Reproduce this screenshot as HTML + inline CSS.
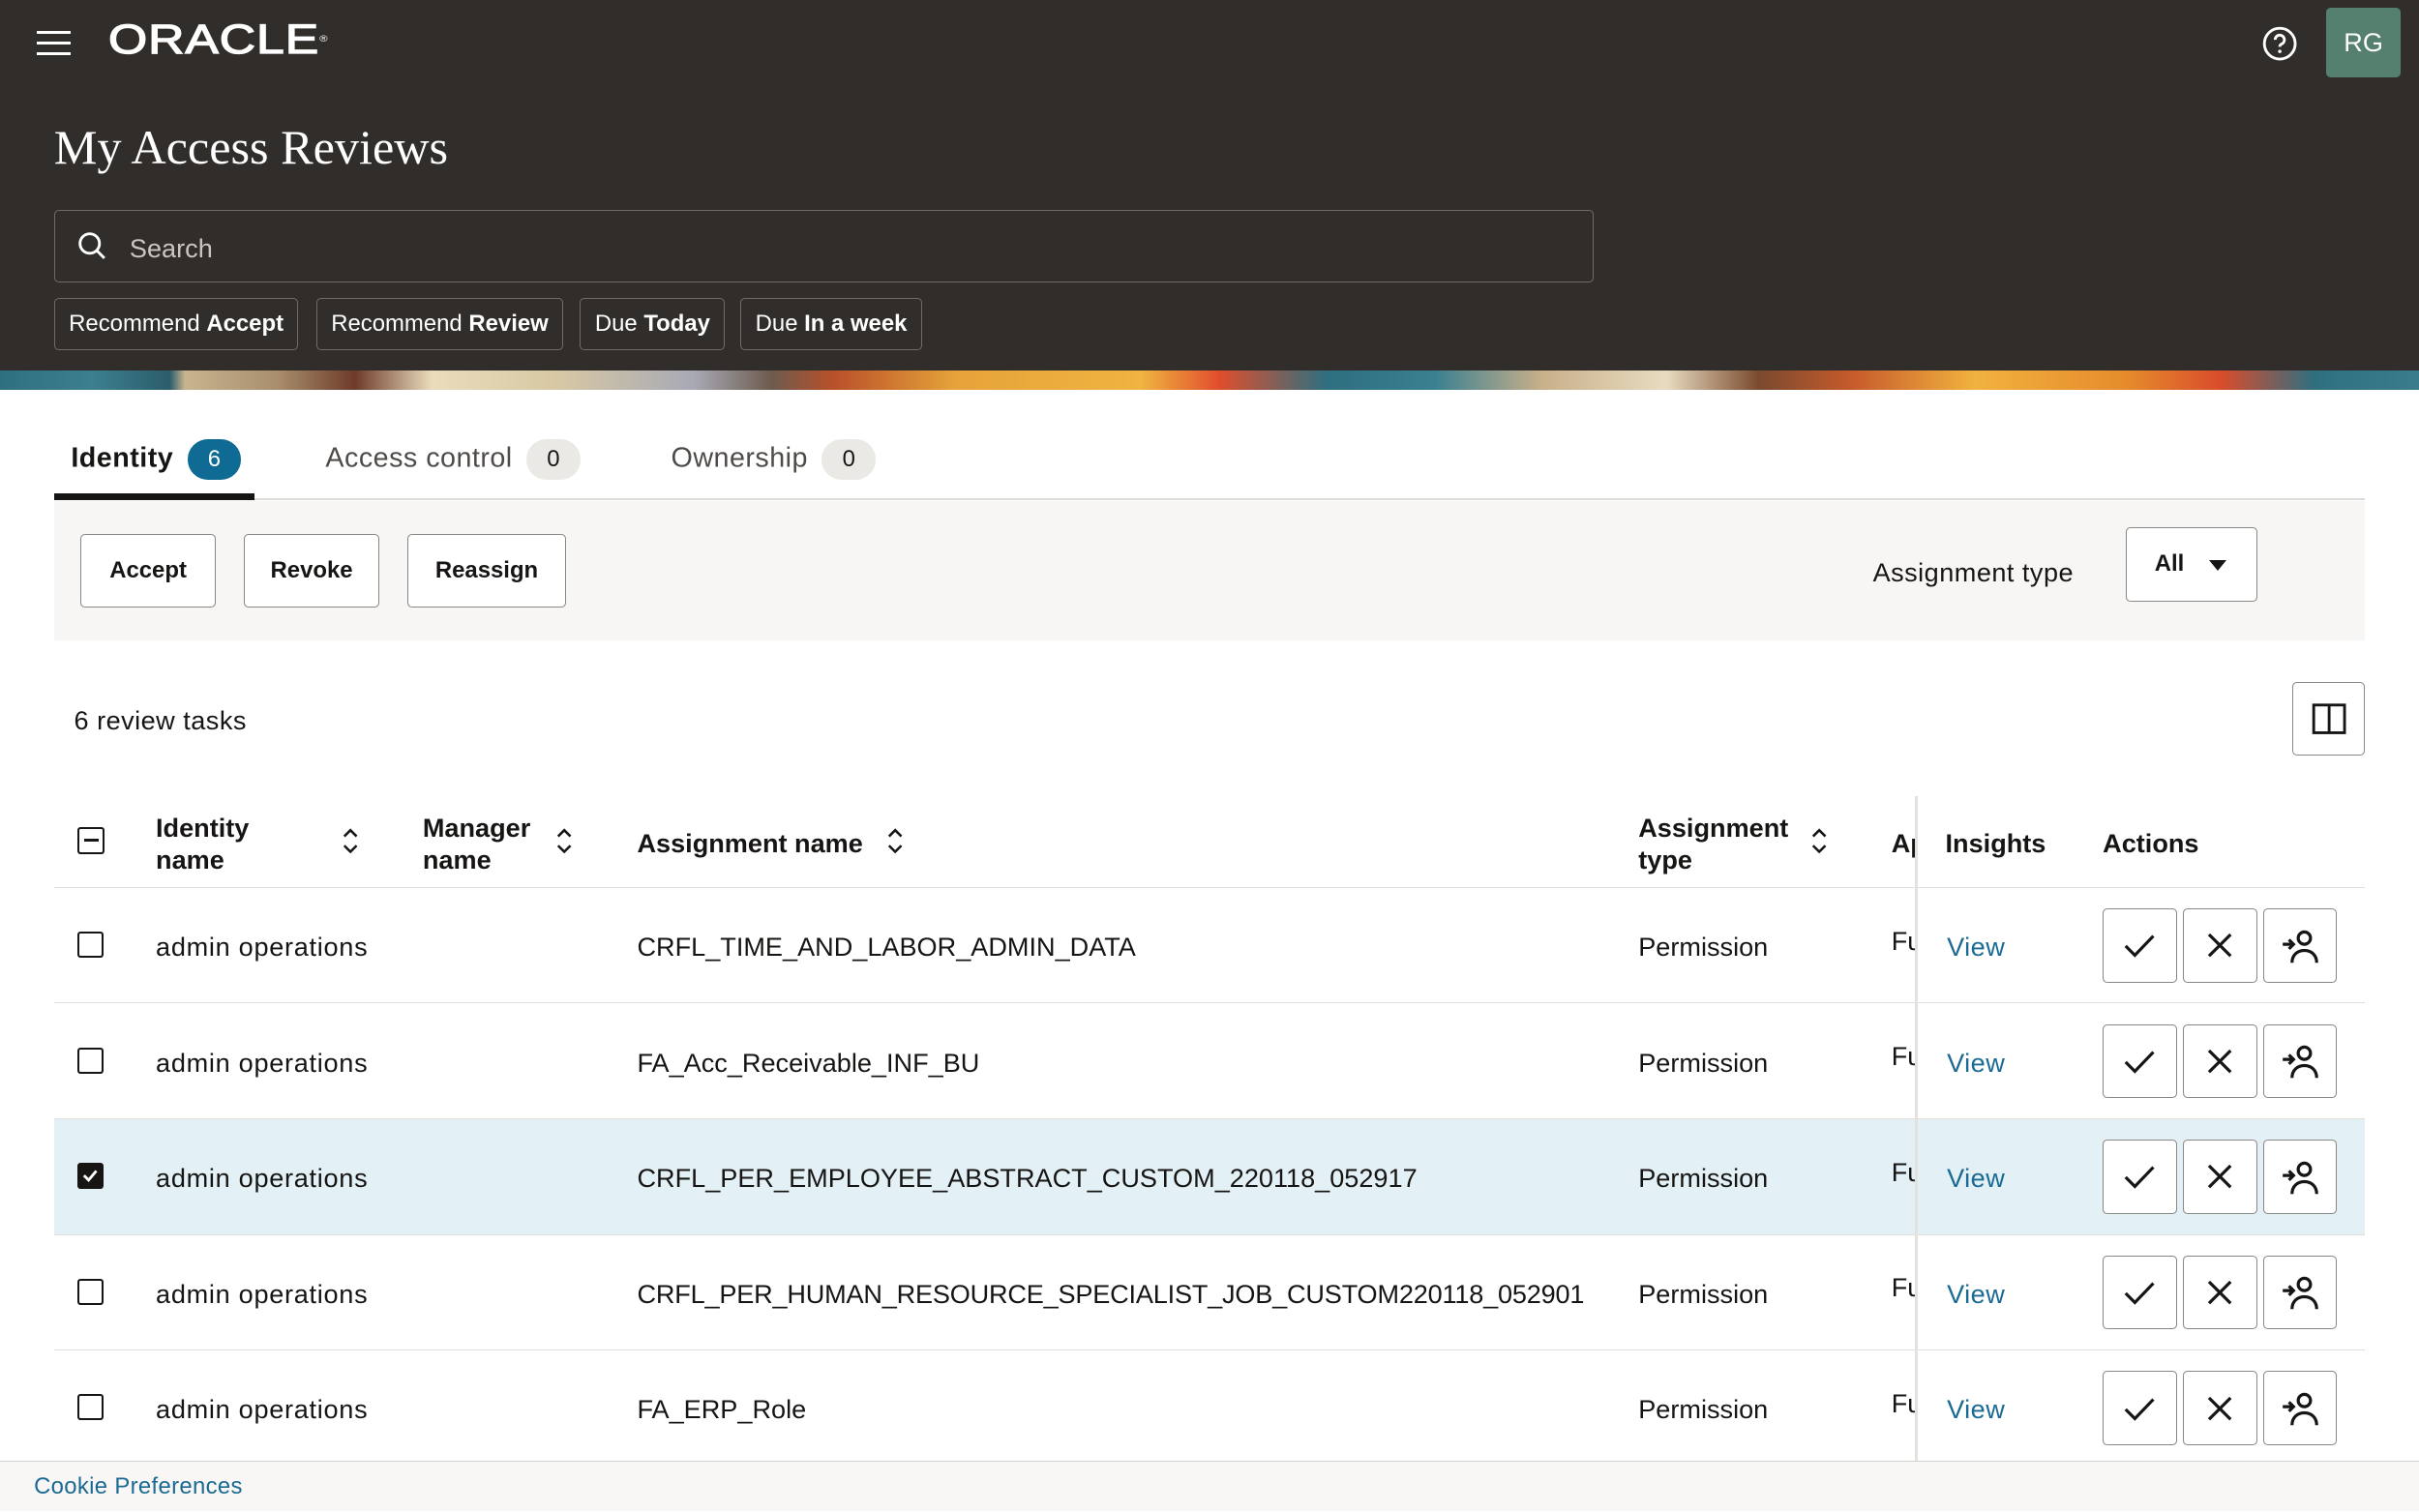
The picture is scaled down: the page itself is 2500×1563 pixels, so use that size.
<!DOCTYPE html>
<html><head><meta charset="utf-8"><style>
*{box-sizing:border-box;margin:0;padding:0}
html,body{width:2500px;height:1563px;overflow:hidden;background:#fff}
#w{zoom:1.59439;width:1568px;height:980px;position:relative;font-family:"Liberation Sans",Arial,sans-serif;color:#161513;font-size:17px}
.a{position:absolute}
.hdr{left:0;top:0;width:1568px;height:241px;background:#312d2a}
.band{left:0;top:240px;width:1568px;height:13px;background:linear-gradient(90deg,#2f6f80 0,#3c7f8f 60px,#2b5d6b 110px,#c8b48f 120px,#a88e6c 180px,#6e3b2a 230px,#eadcbc 280px,#d8c9a4 360px,#a7a9b5 450px,#6d5b4e 500px,#b9502a 540px,#e6a33a 620px,#f0b440 740px,#e04e2c 790px,#2e6f80 860px,#3a8090 930px,#c9b08a 1000px,#e8dcc0 1080px,#7a4a2e 1140px,#c65a2c 1200px,#f1b23e 1280px,#e58a2c 1380px,#d94c2b 1440px,#2f6f80 1500px,#3b7c8c 1568px)}
.chip{top:193px;height:34px;border:1px solid #6f6b67;border-radius:3px;color:#fff;font-size:15px;line-height:32px;padding:0 9px;white-space:nowrap}
.chip b{font-weight:bold}
.tab{top:285px;font-size:18px;color:#4f4b48;white-space:nowrap;letter-spacing:0.3px}
.badge{display:inline-block;min-width:35px;height:26px;border-radius:13px;background:#ebe9e6;text-align:center;line-height:26px;font-size:15px;margin-left:9px;vertical-align:middle;color:#161513;letter-spacing:0}
.btn{height:48px;border:1px solid #8a8683;border-radius:3px;background:#fff;font-weight:bold;font-size:15px;line-height:46px;text-align:center}
.th{font-weight:bold;font-size:17px;line-height:21px}
.row{left:35px;width:1498px;height:75px;border-top:1px solid #e1dfdc}
.cell{font-size:17px;white-space:nowrap}
.cell.ad{letter-spacing:0.45px}
.cb{width:17px;height:17px;border:1.6px solid #161513;border-radius:2px}
.ab{width:48px;height:48px;border:1px solid #8a8683;border-radius:3px;background:#fff;display:flex;align-items:center;justify-content:center}
.view{color:#1a6a93;font-size:17px;letter-spacing:0.3px}
</style></head><body><div id="w">
<div class="a hdr"></div>
<div class="a band"></div>
<div class="a" style="left:24px;top:20px;width:22px;height:16px;border-top:2px solid #fff;border-bottom:2px solid #fff"></div>
<div class="a" style="left:24px;top:27px;width:22px;height:2px;background:#fff"></div>
<div class="a" style="left:70px;top:12px;color:#fff;font-size:27px;line-height:28px;letter-spacing:0.5px;transform:scaleX(1.2);transform-origin:left;-webkit-text-stroke:0.8px #fff">ORACLE<span style="font-size:6px;vertical-align:top;-webkit-text-stroke:0">®</span></div>
<svg class="a" style="left:1466px;top:16px" width="24" height="24" viewBox="0 0 24 24"><circle cx="12" cy="12" r="10" fill="none" stroke="#fff" stroke-width="1.8"/><path d="M9 9.5a3 3 0 1 1 4 2.8c-.8.4-1 .9-1 1.7" fill="none" stroke="#fff" stroke-width="1.8"/><circle cx="12" cy="17" r="1.1" fill="#fff"/></svg>
<div class="a" style="left:1508px;top:5px;width:48px;height:45px;background:#55806f;border-radius:3px;color:#fff;font-size:17px;text-align:center;line-height:45px">RG</div>
<div class="a" style="left:35px;top:77px;color:#fff;font-family:'Liberation Serif',serif;font-size:31.5px">My Access Reviews</div>
<div class="a" style="left:35px;top:136px;width:998px;height:47px;border:1px solid #6f6b67;border-radius:3px"></div>
<svg class="a" style="left:50px;top:150px" width="20" height="20" viewBox="0 0 20 20"><circle cx="8" cy="8" r="6.3" fill="none" stroke="#fff" stroke-width="1.8"/><path d="M12.5 12.5l5 5" stroke="#fff" stroke-width="1.8"/></svg>
<div class="a" style="left:84px;top:151px;color:#c9c6c2;font-size:17px">Search</div>
<div class="a chip" style="left:35px">Recommend <b>Accept</b></div>
<div class="a chip" style="left:205px">Recommend <b>Review</b></div>
<div class="a chip" style="left:376px">Due <b>Today</b></div>
<div class="a chip" style="left:480px">Due <b>In a week</b></div>

<div class="a tab" style="left:46px;color:#161513;font-weight:bold">Identity<span class="badge" style="background:#0f6b93;color:#fff;font-weight:normal">6</span></div>
<div class="a tab" style="left:211px">Access control<span class="badge">0</span></div>
<div class="a tab" style="left:435px">Ownership<span class="badge">0</span></div>
<div class="a" style="left:35px;top:323px;width:1498px;height:1px;background:#dedcd9"></div>
<div class="a" style="left:35px;top:320px;width:130px;height:4px;background:#161513"></div>
<div class="a" style="left:35px;top:325px;width:1498px;height:90px;background:#f7f6f4"></div>
<div class="a btn" style="left:52px;top:346px;width:88px">Accept</div>
<div class="a btn" style="left:158px;top:346px;width:88px">Revoke</div>
<div class="a btn" style="left:264px;top:346px;width:103px">Reassign</div>
<div class="a" style="left:1214px;top:361px;font-size:17px;letter-spacing:0.3px">Assignment type</div>
<div class="a btn" style="left:1378px;top:342px;width:85px;text-align:left;padding-left:18px;line-height:46px">All</div>
<div class="a" style="left:1432px;top:363px;width:0;height:0;border-left:6px solid transparent;border-right:6px solid transparent;border-top:7px solid #161513"></div>

<div class="a" style="left:48px;top:457px;font-size:17px;letter-spacing:0.3px">6 review tasks</div>
<div class="a ab" style="left:1486px;top:442px;width:47px;height:48px"><svg width="24" height="24" viewBox="0 0 24 24"><rect x="2" y="3" width="20" height="18" fill="none" stroke="#161513" stroke-width="1.8"/><path d="M12 3v18" stroke="#161513" stroke-width="1.8"/></svg></div>

<div class="a" style="left:50px;top:536px;width:18px;height:18px;border:1.6px solid #161513;border-radius:2px"><div style="margin:6.5px 3px;height:2px;background:#161513"></div></div>
<div class="a th" style="left:101px;top:526px">Identity<br>name</div>
<div class="a th" style="left:274px;top:526px">Manager<br>name</div>
<div class="a th" style="left:413px;top:536px">Assignment name</div>
<div class="a th" style="left:1062px;top:526px">Assignment<br>type</div>
<div class="a th" style="left:1226px;top:536px;width:16px;overflow:hidden">Ap</div>
<div class="a th" style="left:1261px;top:536px">Insights</div>
<div class="a th" style="left:1363px;top:536px">Actions</div>
<svg class="a" style="left:220px;top:536px" width="14" height="18" viewBox="0 0 14 18"><path d="M3 6l4-4 4 4M3 12l4 4 4-4" fill="none" stroke="#161513" stroke-width="1.6"/></svg>
<svg class="a" style="left:359px;top:536px" width="14" height="18" viewBox="0 0 14 18"><path d="M3 6l4-4 4 4M3 12l4 4 4-4" fill="none" stroke="#161513" stroke-width="1.6"/></svg>
<svg class="a" style="left:573px;top:536px" width="14" height="18" viewBox="0 0 14 18"><path d="M3 6l4-4 4 4M3 12l4 4 4-4" fill="none" stroke="#161513" stroke-width="1.6"/></svg>
<svg class="a" style="left:1172px;top:536px" width="14" height="18" viewBox="0 0 14 18"><path d="M3 6l4-4 4 4M3 12l4 4 4-4" fill="none" stroke="#161513" stroke-width="1.6"/></svg>

<div class="a row" style="top:575px"></div>
<div class="a row" style="top:650px"></div>
<div class="a row" style="top:725px;background:#e3f0f6"></div>
<div class="a row" style="top:800px"></div>
<div class="a row" style="top:875px"></div>
<div class="a" style="left:1241px;top:516px;width:2px;height:432px;background:#e4e2df"></div>

<div class="a cb" style="left:50px;top:604px"></div>
<div class="a cb" style="left:50px;top:679px"></div>
<div class="a cb" style="left:50px;top:754px;background:#161513"><svg width="14" height="14" viewBox="0 0 14 14" style="display:block"><path d="M3 7l3 3 5-6" fill="none" stroke="#fff" stroke-width="1.8"/></svg></div>
<div class="a cb" style="left:50px;top:829px"></div>
<div class="a cb" style="left:50px;top:904px"></div>

<div class="a cell ad" style="left:101px;top:604px">admin operations</div>
<div class="a cell ad" style="left:101px;top:679px">admin operations</div>
<div class="a cell ad" style="left:101px;top:754px">admin operations</div>
<div class="a cell ad" style="left:101px;top:829px">admin operations</div>
<div class="a cell ad" style="left:101px;top:904px">admin operations</div>

<div class="a cell" style="left:413px;top:604px">CRFL_TIME_AND_LABOR_ADMIN_DATA</div>
<div class="a cell" style="left:413px;top:679px">FA_Acc_Receivable_INF_BU</div>
<div class="a cell" style="left:413px;top:754px">CRFL_PER_EMPLOYEE_ABSTRACT_CUSTOM_220118_052917</div>
<div class="a cell" style="left:413px;top:829px;letter-spacing:-0.12px">CRFL_PER_HUMAN_RESOURCE_SPECIALIST_JOB_CUSTOM220118_052901</div>
<div class="a cell" style="left:413px;top:904px">FA_ERP_Role</div>

<div class="a cell" style="left:1062px;top:604px">Permission</div>
<div class="a cell" style="left:1062px;top:679px">Permission</div>
<div class="a cell" style="left:1062px;top:754px">Permission</div>
<div class="a cell" style="left:1062px;top:829px">Permission</div>
<div class="a cell" style="left:1062px;top:904px">Permission</div>

<div class="a cell" style="left:1226px;top:600px;width:15px;overflow:hidden">Fu</div>
<div class="a cell" style="left:1226px;top:675px;width:15px;overflow:hidden">Fu</div>
<div class="a cell" style="left:1226px;top:750px;width:15px;overflow:hidden">Fu</div>
<div class="a cell" style="left:1226px;top:825px;width:15px;overflow:hidden">Fu</div>
<div class="a cell" style="left:1226px;top:900px;width:15px;overflow:hidden">Fu</div>

<div class="a view" style="left:1262px;top:604px">View</div>
<div class="a view" style="left:1262px;top:679px">View</div>
<div class="a view" style="left:1262px;top:754px">View</div>
<div class="a view" style="left:1262px;top:829px">View</div>
<div class="a view" style="left:1262px;top:904px">View</div>

<div class="a" style="left:1363px;top:589px"><div class="a ab" style="left:0"><svg width="24" height="24" viewBox="0 0 24 24"><path d="M3 12.5l6 6L21 6" fill="none" stroke="#161513" stroke-width="2"/></svg></div><div class="a ab" style="left:52px"><svg width="24" height="24" viewBox="0 0 24 24"><path d="M5 5l14 14M19 5L5 19" stroke="#161513" stroke-width="2"/></svg></div><div class="a ab" style="left:104px"><svg width="26" height="26" viewBox="0 0 26 26"><circle cx="16" cy="8" r="4" fill="none" stroke="#161513" stroke-width="2"/><path d="M8 24c0-5 3.5-8 8-8s8 3 8 8M2 12h7M6 9l3 3-3 3" fill="none" stroke="#161513" stroke-width="2"/></svg></div></div>
<div class="a" style="left:1363px;top:664px"><div class="a ab" style="left:0"><svg width="24" height="24" viewBox="0 0 24 24"><path d="M3 12.5l6 6L21 6" fill="none" stroke="#161513" stroke-width="2"/></svg></div><div class="a ab" style="left:52px"><svg width="24" height="24" viewBox="0 0 24 24"><path d="M5 5l14 14M19 5L5 19" stroke="#161513" stroke-width="2"/></svg></div><div class="a ab" style="left:104px"><svg width="26" height="26" viewBox="0 0 26 26"><circle cx="16" cy="8" r="4" fill="none" stroke="#161513" stroke-width="2"/><path d="M8 24c0-5 3.5-8 8-8s8 3 8 8M2 12h7M6 9l3 3-3 3" fill="none" stroke="#161513" stroke-width="2"/></svg></div></div>
<div class="a" style="left:1363px;top:739px"><div class="a ab" style="left:0"><svg width="24" height="24" viewBox="0 0 24 24"><path d="M3 12.5l6 6L21 6" fill="none" stroke="#161513" stroke-width="2"/></svg></div><div class="a ab" style="left:52px"><svg width="24" height="24" viewBox="0 0 24 24"><path d="M5 5l14 14M19 5L5 19" stroke="#161513" stroke-width="2"/></svg></div><div class="a ab" style="left:104px"><svg width="26" height="26" viewBox="0 0 26 26"><circle cx="16" cy="8" r="4" fill="none" stroke="#161513" stroke-width="2"/><path d="M8 24c0-5 3.5-8 8-8s8 3 8 8M2 12h7M6 9l3 3-3 3" fill="none" stroke="#161513" stroke-width="2"/></svg></div></div>
<div class="a" style="left:1363px;top:814px"><div class="a ab" style="left:0"><svg width="24" height="24" viewBox="0 0 24 24"><path d="M3 12.5l6 6L21 6" fill="none" stroke="#161513" stroke-width="2"/></svg></div><div class="a ab" style="left:52px"><svg width="24" height="24" viewBox="0 0 24 24"><path d="M5 5l14 14M19 5L5 19" stroke="#161513" stroke-width="2"/></svg></div><div class="a ab" style="left:104px"><svg width="26" height="26" viewBox="0 0 26 26"><circle cx="16" cy="8" r="4" fill="none" stroke="#161513" stroke-width="2"/><path d="M8 24c0-5 3.5-8 8-8s8 3 8 8M2 12h7M6 9l3 3-3 3" fill="none" stroke="#161513" stroke-width="2"/></svg></div></div>
<div class="a" style="left:1363px;top:889px"><div class="a ab" style="left:0"><svg width="24" height="24" viewBox="0 0 24 24"><path d="M3 12.5l6 6L21 6" fill="none" stroke="#161513" stroke-width="2"/></svg></div><div class="a ab" style="left:52px"><svg width="24" height="24" viewBox="0 0 24 24"><path d="M5 5l14 14M19 5L5 19" stroke="#161513" stroke-width="2"/></svg></div><div class="a ab" style="left:104px"><svg width="26" height="26" viewBox="0 0 26 26"><circle cx="16" cy="8" r="4" fill="none" stroke="#161513" stroke-width="2"/><path d="M8 24c0-5 3.5-8 8-8s8 3 8 8M2 12h7M6 9l3 3-3 3" fill="none" stroke="#161513" stroke-width="2"/></svg></div></div>

<div class="a" style="left:0;top:947px;width:1568px;height:33px;background:#f8f7f5;border-top:1px solid #d6d3cf"></div>
<div class="a" style="left:22px;top:955px;color:#1a6a93;font-size:15px;letter-spacing:0.2px">Cookie Preferences</div>
</div></body></html>
